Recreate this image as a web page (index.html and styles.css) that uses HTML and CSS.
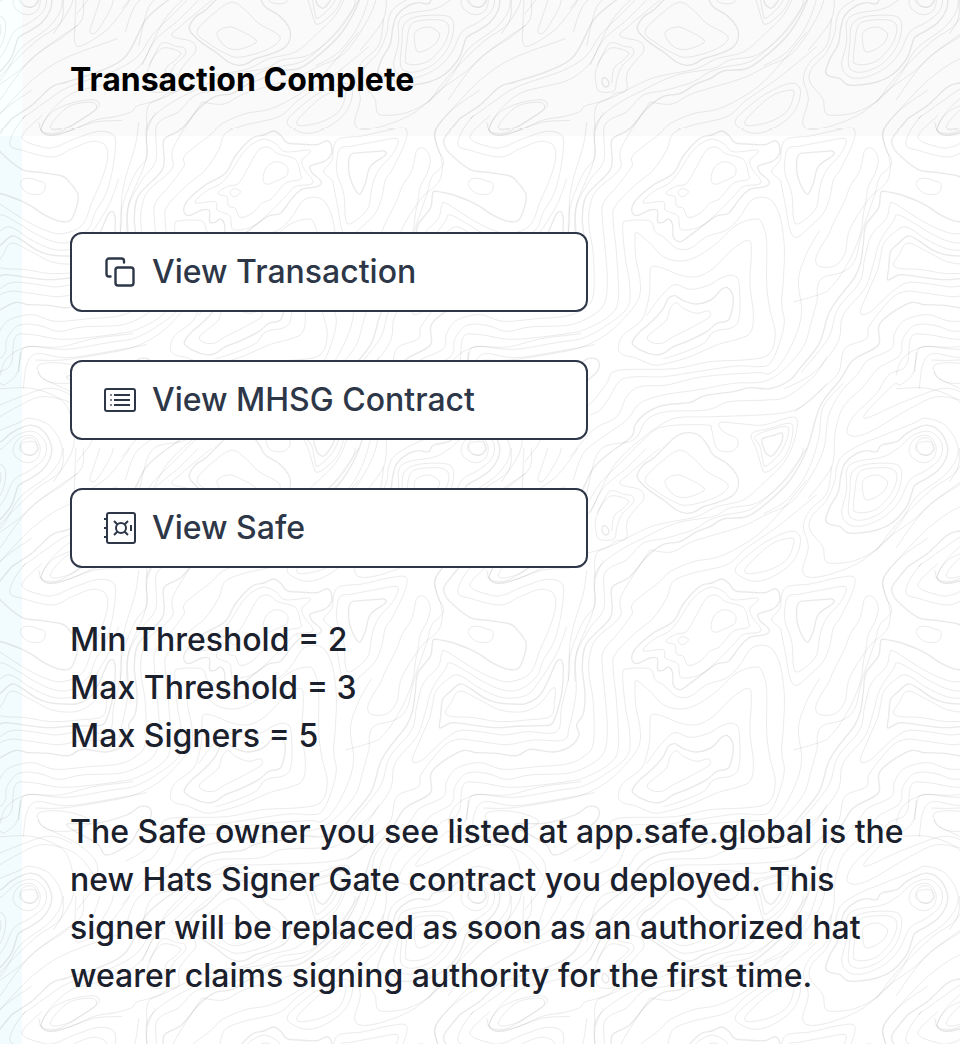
FILE: index.html
```html
<!DOCTYPE html>
<html lang="en">
<head>
<meta charset="utf-8">
<meta name="viewport" content="width=device-width, initial-scale=1">
<title>Transaction Complete</title>
<link rel="stylesheet" href="styles.css">
</head>
<body>
<svg class="topo" aria-hidden="true">
  <defs>
    <pattern id="topo-tile" patternUnits="userSpaceOnUse" width="1344" height="1344" patternTransform="translate(450 130) scale(0.33333)"></pattern>
  </defs>
  <rect width="100%" height="100%" fill="url(#topo-tile)"></rect>
</svg>
<div class="page">
  <div class="rail"><div class="rail-top"></div></div>
  <div class="panel">
    <header class="panel-header"><h1 class="title">Transaction Complete</h1></header>
    <main class="content">
      <div class="actions">
        <button class="action" type="button">
          <svg class="icon" viewBox="0 0 32 32" fill="none" stroke="currentColor" stroke-width="2.4" stroke-linecap="round" stroke-linejoin="round"><rect x="11.5" y="11.5" width="18" height="18" rx="2.5"/><path d="M6.5 20.500H5A2.500 2.500 0 0 1 2.500 18V5A2.500 2.500 0 0 1 5 2.500H17.500A2.500 2.500 0 0 1 20 5V6.500"/></svg>
          View Transaction
        </button>
        <button class="action" type="button">
          <svg class="icon" viewBox="0 0 32 32" fill="none" stroke="currentColor" stroke-width="2"><rect x="1" y="5" width="30" height="22" rx="2"/><path d="M10 11H26M10 16H26M10 21H26"/><path stroke-opacity=".6" d="M6 11H8M6 16H8M6 21H8"/></svg>
          View MHSG Contract
        </button>
        <button class="action" type="button">
          <svg class="icon" viewBox="0 0 32 32" fill="none" stroke="currentColor" stroke-width="2"><rect x="3" y="1" width="28" height="30" rx="2"/><path d="M0 7H3M0 16H3M0 25H3M27 13V19"/><circle cx="17" cy="16" r="5"/><path d="M10 9L13.500 12.500M24 9L20.500 12.500M10 23L13.500 19.500M24 23L20.500 19.500"/></svg>
          View Safe
        </button>
      </div>
      <div class="details">
        <p>Min Threshold = 2</p>
        <p>Max Threshold = 3</p>
        <p>Max Signers = 5</p>
      </div>
      <p class="note">The Safe owner you see listed at app.safe.global is the new Hats Signer Gate contract you deployed. This signer will be replaced as soon as an authorized hat wearer claims signing authority for the first time.</p>
    </main>
  </div>
</div>
<script src="contours.js"></script>
</body>
</html>
```
FILE: styles.css
```css
* { box-sizing: border-box; }
body { margin: 0; background: #fff; color: #1a202c; font-family: Inter, "Liberation Sans", sans-serif; font-size: 32px; font-weight: 500; line-height: 48px; }
h1, p { margin: 0; }
.page { display: flex; min-height: 100vh; }
.rail { flex: 0 0 22px; background: #f2fbfd; }
.rail-top { height: 136px; background: #faffff; }
.panel { flex: 1; min-width: 0; }
.panel-header { height: 136px; padding: 56px 48px 32px; background: #fafafa; }
.title { color: #000; font-size: 32px; font-weight: 700; line-height: 48px; }
.content { padding: 96px 48px 44px; }
.actions { display: flex; flex-direction: column; gap: 48px; }
.action { position: relative; z-index: 2; display: flex; align-items: center; gap: 16px; width: 100%; max-width: 518px; height: 80px; padding: 0 32px; border: 2px solid #2d3748; border-radius: 12px; background: #fff; color: #2d3748; font: inherit; text-align: left; white-space: nowrap; cursor: pointer; }
.icon { width: 32px; height: 32px; flex: none; }
.details, .note { margin-top: 48px; position: relative; z-index: 2; }
.title { position: relative; z-index: 2; }
.topo { position: absolute; z-index: 1; top: 0; left: 0; width: 100%; height: 100%; min-height: 100vh; pointer-events: none; }
.contour { fill: none; stroke: #000; stroke-width: 3; stroke-opacity: .075; stroke-linejoin: round; }
.contour-index { stroke-width: 4; stroke-opacity: .085; }
```
FILE: contours.js
```javascript
// Contour rows: kind, x shift, y shift, points. Upper case = index contour; c = closed, o = open.
const rows = `
C 0 0 545,240 560,208 610,165 670,130 700,78 750,25 785,15 815,3 835,15 855,38 890,42 945,44 975,32 989,50 985,78 965,95 925,108 930,128 958,155 945,170 900,178 870,205 835,250 800,258 755,290 715,320 690,335 670,320 668,285 655,267 640,277 623,275 622,242 600,240 560,257
C 0 0 1045,75 1075,68 1120,65 1145,63 1150,75 1105,110 1090,160 1072,193 1050,160 1040,120
C 0 0 547,640 565,610 610,570 640,535 655,505 675,497 700,512 740,522 785,508 815,478 832,473 848,495 848,530 835,570 800,580 770,605 710,635 670,650 640,670 612,674 575,662
C 0 0 1127,1170 1140,1130 1165,1085 1172,1040 1185,1000 1220,970 1250,962 1280,965 1295,945 1340,935 1370,910 1410,890 1435,886 1465,900 1490,940 1490,980 1465,1020 1430,1045 1395,1065 1385,1090 1370,1130 1330,1175 1280,1200 1215,1210 1190,1207 1170,1190 1140,1183
C 0 0 562,1040 580,1005 610,985 650,945 680,918 715,908 750,918 775,950 790,975 830,1000 860,1035 865,1065 850,1095 810,1115 760,1130 735,1145 710,1150 680,1140 640,1110 590,1075
C 0 0 936,930 955,920 975,915 995,909 997,930 985,955 965,978 955,975 945,965
C 0 0 457,1192 465,1187 476,1200 473,1213 463,1213 457,1203
C -210 -54 178,502 182,470 187,420 205,400 240,372 270,385 310,412 350,428 400,432 440,430 480,405 505,360 530,305 545,302 550,330 545,400 530,460 515,492 490,497 420,498 350,503 290,497 220,488 190,500
C -6 -54 200,795 290,790 380,765 420,740 450,745 450,775 415,810 390,850 320,885 290,850
O 0 0 1374,-35 1345,0 1327,25 1327,45 1344,71 1404,118 1464,128 1524,138 1546,156 1571,191 1569,226 1549,271 1519,274 1474,256 1424,224 1364,198 1304,184 1292,191 1285,235 1248,285 1240,340 1232,396 1212,445 1164,506 1134,556 1108,640 1050,715 1020,750 960,776 900,773 850,785 765,797 720,817 640,826 590,848 555,885 545,920 480,968 430,1015 390,1094 360,1134 290,1169 194,1200 150,1214 90,1269 30,1309
O 390 510 95,900 98,860 150,830 200,770 250,733 300,725 350,695 390,680 430,657 500,650 560,610 630,540 680,450 720,320 780,240 820,180 895,135 900,70 985,10 1034,14 1094,16 1154,23 1194,4 1264,12 1314,-4 1341,-39 1334,-69 1354,-104 1359,-164 1351,-244 1364,-314 1434,-389 1439,-444
c 90 -390 490,608 520,575 570,548 600,510 640,450 690,418 730,430 760,455 830,450 830,462 810,480 815,505 842,540 835,553 790,560 760,590 700,650 660,680 620,690 600,685 595,650 580,640 555,630 550,605
c 90 -390 560,575 590,558 620,550 650,500 680,450 710,442 740,462 790,478 805,520 805,538 760,550 720,595 690,610 660,640 625,652 610,625 590,618 585,590 565,585
c 90 -390 693,535 705,500 735,485 765,500 765,525 740,540 705,553
c 90 -390 595,575 608,566 625,574 615,588 600,588
c 0 0 55,160 65,147 85,145 110,153 128,160 128,180 115,192 85,192 65,180
c 90 -390 915,480 925,445 960,438 1030,425 1090,415 1098,430 1080,465 1040,510 1020,560 1010,620 980,655 950,672 940,650 935,580 915,520
c 90 -390 875,515 900,480 905,440 925,415 990,408 1060,392 1115,385 1125,405 1110,450 1080,510 1060,540 1050,590 1030,640 990,680 950,712 930,690 915,610 905,560 900,540
c 90 -390 1155,450 1180,448 1195,480 1185,520 1165,560 1155,610 1130,650 1105,700 1095,760 1065,797 1020,800 1007,780 1020,745 1045,705 1060,670 1095,600 1110,560 1140,510
c 0 0 592,622 620,595 650,570 660,535 680,518 700,535 740,550 775,542 780,558 760,573 710,600 670,620 635,640 605,637
c 0 0 505,655 520,615 575,570 597,500 600,440 605,410 640,415 690,435 740,440 790,415 840,365 880,335 900,335 904,370 900,460 910,550 905,600 880,622 800,645 720,680 650,700 610,705 555,683 520,675
o -210 -54 800,610 850,545 885,518 930,532 985,520 1030,495 1065,492 1078,520 1078,610 1060,645 1000,660 970,695 900,725 850,740
o 0 0 100,690 180,690 300,672 400,650 480,605 540,545 568,500 570,450 557,380 555,330 560,308 600,340 640,380 690,393 740,380 800,340 860,285 920,267 940,290 950,340 950,460 960,540 975,600 970,650 945,680 880,690 780,695 700,712 640,718 500,722 470,760 440,800 415,825 370,850
o 0 0 50,726 55,685 75,650 190,658 330,636 400,624 470,586 530,536 540,476 525,376 518,290 530,273 600,273 615,305 640,320 680,355 720,355 770,320 830,300 870,260 900,215 930,202 965,212 990,260 1003,350 1000,450 995,520 1003,580 985,650 960,700 930,710 860,708 760,722 640,740 560,740 510,752 480,800 450,840 420,855
c 90 -390 55,380 80,345 120,315 180,307 193,325 160,350 110,380 70,390
o 90 -390 500,0 440,60 370,120 330,190 270,238 200,258 120,280 60,330 28,380 35,400 60,405 120,390 190,360 250,350 300,335 315,318 380,300 405,280 440,270 440,225 460,190 490,155 480,125 420,108 450,75 540,0
c 90 -390 347,240 348,210 375,150 395,128 430,138 458,145 458,165 425,200 410,240 405,270 385,277 355,272
o 90 -390 350,195 390,145 445,157 430,180 402,205 395,250
c 90 -390 495,95 540,45 597,7 640,30 680,70 740,105 735,130 690,155 620,172 580,160 530,130
c 90 -390 555,100 580,83 610,85 670,118 660,135 610,149 575,135
c 90 -390 765,365 800,325 860,280 930,250 960,265 955,310 930,350 880,385 830,400 790,390
c 90 -390 795,365 830,325 880,285 935,270 940,290 920,335 870,365 810,377
c 0 0 1237,1065 1245,1045 1280,1035 1312,1055 1300,1085 1270,1105 1245,1107
c 0 0 1210,1130 1215,1080 1225,1030 1260,1015 1320,1015 1340,1035 1330,1080 1290,1130 1250,1147 1215,1145
c 0 0 1195,1140 1200,1080 1205,1030 1240,1005 1320,1000 1352,1015 1352,1060 1330,1110 1290,1150 1240,1170 1205,1165
c 0 0 1175,1150 1190,1080 1190,1020 1220,995 1300,980 1350,950 1390,915 1440,905 1475,940 1470,985 1430,1020 1380,1050 1350,1110 1310,1155 1250,1185 1200,1185
c 0 0 1397,955 1410,938 1440,935 1450,955 1435,975 1410,972
c 0 0 1377,960 1395,925 1435,917 1458,950 1450,985 1420,998 1390,985
c 0 0 915,920 960,900 1010,890 1013,920 990,970 950,1007 940,1000 930,950
c 0 0 905,912 960,895 1020,880 1028,910 1010,970 975,1010 945,1027 935,1010 920,960
o 0 0 435,1344 440,1270 500,1240 590,1195 650,1178 740,1160 800,1130 880,1110 940,1060 1000,1000 1030,940 1042,875 1020,862 940,885 880,882 810,878 820,905 860,925 862,950 840,965 800,955 785,900 770,885 640,890 580,930 520,990 450,1060 410,1120 340,1165 200,1215 130,1260 60,1310
o 90 -390 265,700 270,620 310,520 345,470 345,380 400,320 490,270 590,225 700,205 750,180 830,165 900,110 960,30 970,0
o 90 -390 285,700 288,620 330,540 372,480 375,375 440,335 490,285 560,270 640,245 690,215 740,200 810,185 870,140 930,80 980,0
o -210 -54 810,-30 725,105 720,170 650,235 628,290 628,350 640,430 640,550 610,590 560,612 470,620 370,628 300,608 230,625 200,665 190,710 120,745 90,784 36,844 1,914 -12,1008 -50,1090 -110,1170 -190,1210 -250,1240 -330,1265 -410,1290 -470,1320 -534,1314
o -210 -54 1280,-240 1150,-90 1030,-15 940,5 870,35 840,64 760,129 755,164 710,224 670,274 668,330 682,500 670,580 620,620 560,640 450,645 380,658 320,640 260,640 225,680 215,730 150,770 106,824 46,884 21,964 11,1064 -60,1160
o -210 -54 1310,-196 1200,-106 1100,-36 1040,14 940,39 880,64 860,114 820,174 760,224 705,284 700,330 710,430 715,560 690,610 620,650 560,665 400,682 300,668 250,675 235,760 180,790 146,844 76,914 59,965 116,964 256,884 336,854 430,880 490,950
o -210 -54 265,720 255,785 216,819 196,819 116,899 120,917 216,874 346,829 420,850
c 390 510 1060,200 1100,188 1170,196 1220,220 1180,245 1120,250 1080,238
c -210 -54 200,465 215,425 240,393 300,420 360,450 430,455 480,430 522,382 523,430 510,470 440,480 360,485 280,473
o -210 -54 280,10 245,60 235,100 270,115 360,135 420,110 480,88 520,100 527,140 510,200 480,270 450,340 390,365 340,355 280,325 200,275 185,280 175,320 130,370 110,440 95,510 30,590 0,680 -80,780
o -210 -54 330,10 270,75 330,105 370,105 430,80 500,58 545,70 550,110 540,180 520,250 490,300 470,350 420,388 370,390 310,365 215,310 195,330 155,390 135,460 110,530 45,610 30,690 -40,780 -130,830
o -210 -54 620,30 610,100 580,200 568,270 568,340 545,440 530,515 440,515 370,525 300,515 235,513 180,550 130,598 97,603 120,540 150,470 165,400 195,365 235,345 300,385 370,413 440,405 480,360 530,280 560,200
o -210 -54 670,0 645,60 640,150 590,280 588,400 568,500 550,540 460,540 380,554 290,543 235,538 190,560 125,640 115,680 50,710 30,784 -40,850 -100,900
o -210 -54 320,30 330,60 370,70 430,50 490,30 570,25
c 90 -390 1372,390 1400,340 1460,310 1530,300 1540,325 1450,385 1410,400
c 390 510 770,500 790,465 850,430 900,410 1000,370 1040,355 1100,380 1135,450 1100,520 1010,590 960,670 900,740 830,780 760,790 735,780 728,740 690,690 695,650 740,600 765,540
o 390 510 1180,520 1080,590 1000,660 930,710 850,780 760,820 690,832 668,810 685,740 670,680 690,630 740,580 755,500
o 390 510 1300,560 1140,620 1050,680 980,750 920,820 910,860 930,930 920,990 860,1050 840,1150 800,1240 750,1310 710,1330 640,1350
o 90 -390 1012,900 1013,860 1030,832 1090,815 1125,780 1145,700 1165,640 1185,580 1200,530 1235,490 1215,440 1210,390 1260,330 1344,270
o 0 0 1110,300 1070,370 1045,450 1055,540 1040,610 1000,690 960,730 920,728 760,740 650,765 570,770 530,800 500,860 430,900 360,980
o 0 0 1102,510 1080,590 1060,650 1000,720 940,755 850,760 740,780 640,795 570,820 530,870 460,920 400,970 370,1050
o 390 510 20,580 60,450 160,420 200,360 260,335 380,330 450,305 560,300 620,290 700,230 740,170
o 390 510 30,640 100,500 180,420 250,370 300,352 400,350 600,340 680,310 740,250
o 390 510 550,642 620,600 680,520 715,420 730,320 790,250
o -6 -54 0,790 20,740 80,705 180,705 280,680 400,665
o -6 -54 70,830 80,760 110,725 200,737 320,720 440,698
c -6 -54 60,1000 75,980 100,980 115,1010 100,1028 75,1025
o -6 -390 190,0 180,70 100,130 0,230 -60,310
o -6 -390 250,0 245,60 190,110 90,180 0,300
o -6 -390 300,0 280,60 270,95 290,95 330,30 340,0
o -6 -390 228,0 225,70 225,130 250,135 320,90 370,30 390,0
o -6 -54 115,780 130,800 230,850 290,910 280,980 230,1050
o -6 -54 0,830 100,830 190,870 220,950 215,1020 160,1110
`;
const num = v => Math.round(v * 10) / 10;

// Catmull-Rom spline through the points, written as cubic segments.
function smooth(p, closed) {
  const n = p.length;
  const at = i => closed ? p[(i + n) % n] : p[Math.max(0, Math.min(n - 1, i))];
  let d = "M" + p[0].join(" ");
  for (let i = 0; i < (closed ? n : n - 1); i++) {
    const [a, b, c, e] = [at(i - 1), at(i), at(i + 1), at(i + 2)];
    d += "C" + [b[0] + (c[0] - a[0]) / 6, b[1] + (c[1] - a[1]) / 6, c[0] - (e[0] - b[0]) / 6, c[1] - (e[1] - b[1]) / 6, c[0], c[1]].map(num).join(" ");
  }
  return d + (closed ? "Z" : "");
}

const data = { thin: "", index: "" };
for (const row of rows.trim().split("\n")) {
  const [kind, dx, dy, ...points] = row.split(" ");
  const xy = points.map(s => s.split(",").map(Number)).map(([x, y]) => [x + +dx, y + +dy]);
  data[kind < "a" ? "index" : "thin"] += smooth(xy, kind.toLowerCase() === "c");
}

const tile = document.getElementById("topo-tile");
const svg = "http://www.w3.org/2000/svg";
for (let i = -2; i <= 2; i++) {
  for (let j = -2; j <= 2; j++) {
    for (const [key, cls] of [["thin", "contour"], ["index", "contour contour-index"]]) {
      const path = document.createElementNS(svg, "path");
      path.setAttribute("d", data[key]);
      path.setAttribute("class", cls);
      path.setAttribute("transform", `translate(${i * 1344} ${j * 1344})`);
      tile.appendChild(path);
    }
  }
}
```
